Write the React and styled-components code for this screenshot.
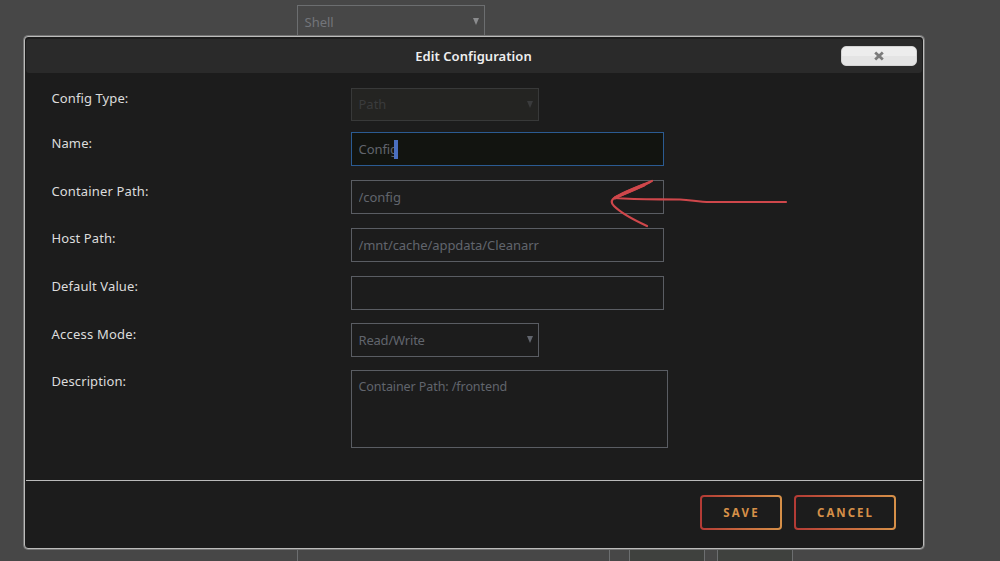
import React, { useState } from 'react';
import styled, { createGlobalStyle } from 'styled-components';

const GlobalStyle = createGlobalStyle`
    * {
        box-sizing: border-box;
    }

    body {
        margin: 0;
        background: #474747;
        font-family: "Noto Sans", "Open Sans", sans-serif;
        font-size: 13px;
        overflow: hidden;
    }
`;

const Page = styled.div`
    position: relative;
    display: flex;
    flex-direction: column;
    justify-content: space-between;
    height: 561px;
    padding: 5px 0 0 297px;
    background: #474747;
`;

const PageRow = styled.div`
    display: flex;
    height: 34px;
`;

const PageInput = styled.div`
    width: 313px;
    margin-right: 19px;
    border: 1px solid #6c6e70;
    border-bottom: none;
`;

const PageButton = styled.div`
    width: 76px;
    margin-right: 12px;
    border: 1px solid #6c6e70;
    border-bottom: none;
    background: #3f413e;
`;

const Modal = styled.div`
    position: absolute;
    left: 24px;
    top: 36px;
    width: 900px;
    height: 513px;
    display: flex;
    flex-direction: column;
    padding: 2px 1px 0;
    border: 1px solid #bcbcbb;
    border-radius: 4px;
    box-shadow: 0 0 0 1px #747474;
    background: #1c1c1c;
`;

const TitleBar = styled.header`
    display: grid;
    grid-template-columns: 1fr auto 1fr;
    align-items: center;
    height: 34px;
    flex: none;
    padding: 0 5px 0 4px;
    border-radius: 3px;
    background: #2a2a2a;
`;

const Title = styled.h1`
    grid-column: 2;
    margin: 0;
    font-size: 13px;
    font-weight: 600;
    letter-spacing: 0.06px;
    color: #efefef;
`;

const CloseButton = styled.button`
    justify-self: end;
    display: flex;
    align-items: center;
    justify-content: center;
    width: 76px;
    height: 20px;
    padding: 0;
    border: 1px solid #d3d3d3;
    border-radius: 5px;
    background: linear-gradient(#ededed 50%, #e4e4e4 50%);
`;

const Fields = styled.div`
    flex: 1;
    padding: 15px 0 0 25px;
`;

const Row = styled.div`
    display: flex;
    align-items: flex-start;
    height: ${({ $height }) => $height || 48}px;
`;

const Label = styled.label`
    width: 300px;
    padding-top: ${({ $top }) => $top || 1}px;
    padding-left: 0.5px;
    line-height: 18px;
    letter-spacing: ${({ $track }) => $track || 0.1}px;
    color: #dcdcdc;
`;

const fieldColor = '#61656d';
const fieldBorder = '#5a5d63';

const Input = styled.input`
    width: 313px;
    height: 34px;
    padding: 0 6.5px;
    border: 1px solid ${({ $focused }) => ($focused ? '#2b5b92' : fieldBorder)};
    outline: none;
    background: ${({ $focused }) => ($focused ? '#121410' : 'transparent')};
    color: ${fieldColor};
    font: inherit;
    letter-spacing: -0.07px;
`;

const FocusBox = styled.div`
    position: relative;
    display: flex;
`;

const Caret = styled.span`
    position: absolute;
    left: 43px;
    top: 8px;
    width: 4px;
    height: 19px;
    background: #4a6fc0;
`;

const SelectBox = styled.div`
    display: flex;
    align-items: center;
    justify-content: space-between;
    width: 188px;
    height: ${({ $height }) => $height || 34}px;
    padding: 0 5px 1px 6.5px;
    border: 1px solid ${({ $disabled, $border }) => ($disabled ? '#383939' : $border || fieldBorder)};
    background: ${({ $disabled }) => ($disabled ? '#242422' : 'transparent')};
    color: ${({ $disabled, $color }) => ($disabled ? '#3a3b3c' : $color || fieldColor)};
    letter-spacing: ${({ $track }) => $track || 0}px;
`;

const Triangle = styled.span`
    border: solid transparent;
    border-width: 7px 3px 0;
    border-top-color: ${({ $color }) => $color || 'currentColor'};
`;

const TextArea = styled.textarea`
    width: 317px;
    height: 78px;
    padding: 7px 6.5px;
    border: 1px solid ${fieldBorder};
    outline: none;
    resize: none;
    background: transparent;
    color: ${fieldColor};
    font: inherit;
    font-size: 12.5px;
    line-height: 18px;
    letter-spacing: -0.08px;
`;

const Footer = styled.footer`
    display: flex;
    justify-content: flex-end;
    gap: 12px;
    height: 68px;
    flex: none;
    padding: 14px 26px 0 0;
    border-top: 1px solid #bababa;
`;

const ActionButton = styled.button`
    width: ${({ $width }) => $width}px;
    height: 35px;
    padding: 0 0 0 1px;
    border: 2px solid transparent;
    border-radius: 4px;
    background:
        linear-gradient(#1c1c1c, #1c1c1c) padding-box,
        linear-gradient(90deg, #b33a35 0%, #c8683e 50%, #d69048 100%) border-box;
    color: #d69048;
    font-family: inherit;
    font-size: 11.5px;
    font-weight: 700;
    letter-spacing: ${({ $track }) => $track}px;
`;

const Arrow = styled.svg`
    position: absolute;
    left: 600px;
    top: 170px;
    pointer-events: none;
`;

const Select = ({ value, triangle, ...rest }) => (
    <SelectBox {...rest}>
        <span>{value}</span>
        <Triangle $color={triangle} />
    </SelectBox>
);

const App = () => {
    const [name, setName] = useState('Config');
    const [containerPath, setContainerPath] = useState('/config');
    const [hostPath, setHostPath] = useState('/mnt/cache/appdata/Cleanarr');
    const [defaultValue, setDefaultValue] = useState('');
    const [description, setDescription] = useState('Container Path: /frontend');

    return (
        <>
            <GlobalStyle />
            <Page>
                <PageRow>
                    <Select value="Shell" $border="#6c6e70" $color="#73757a" triangle="#8b8c8e" />
                </PageRow>
                <PageRow>
                    <PageInput />
                    <PageButton />
                    <PageButton />
                </PageRow>

                <Modal>
                    <TitleBar>
                        <Title>Edit Configuration</Title>
                        <CloseButton aria-label="Close">
                            <svg width="10" height="10" viewBox="0 0 10 10">
                                <path d="M1.2 1.5 8.8 8.5M8.8 1.5 1.2 8.5" stroke="#7b7b7b" strokeWidth="2.8" />
                            </svg>
                        </CloseButton>
                    </TitleBar>

                    <Fields>
                        <Row $height={44}>
                            <Label>Config Type:</Label>
                            <Select value="Path" $height={33} $disabled />
                        </Row>
                        <Row>
                            <Label $top={2}>Name:</Label>
                            <FocusBox>
                                <Input value={name} onChange={(e) => setName(e.target.value)} $focused />
                                <Caret />
                            </FocusBox>
                        </Row>
                        <Row>
                            <Label $top={2} $track={0.14}>Container Path:</Label>
                            <Input value={containerPath} onChange={(e) => setContainerPath(e.target.value)} />
                        </Row>
                        <Row>
                            <Label>Host Path:</Label>
                            <Input value={hostPath} onChange={(e) => setHostPath(e.target.value)} />
                        </Row>
                        <Row $height={47}>
                            <Label>Default Value:</Label>
                            <Input value={defaultValue} onChange={(e) => setDefaultValue(e.target.value)} />
                        </Row>
                        <Row $height={47}>
                            <Label $top={2} $track={0.22}>Access Mode:</Label>
                            <Select value="Read/Write" $track={-0.2} />
                        </Row>
                        <Row $height={78}>
                            <Label $top={2}>Description:</Label>
                            <TextArea value={description} onChange={(e) => setDescription(e.target.value)} />
                        </Row>
                    </Fields>

                    <Footer>
                        <ActionButton $width={82} $track={2.2}>SAVE</ActionButton>
                        <ActionButton $width={102} $track={2}>CANCEL</ActionButton>
                    </Footer>
                </Modal>

                {/* hand drawn arrow over the container path */}
                <Arrow width="190" height="60" fill="none" stroke="#cf474b" strokeWidth="2.2" strokeLinecap="round">
                    <path d="M52 11C38 17 20 23 13 29C11 31 11 33 14 36C22 44 34 50 47 56" />
                    <path d="M50 12C36 20 24 24 14 28C40 30 60 29 80 29.5C92 30 98 32 110 32H186" />
                    <path d="M44 15C34 19 24 23 15 28" strokeWidth="3" />
                </Arrow>
            </Page>
        </>
    );
};

export default App;
